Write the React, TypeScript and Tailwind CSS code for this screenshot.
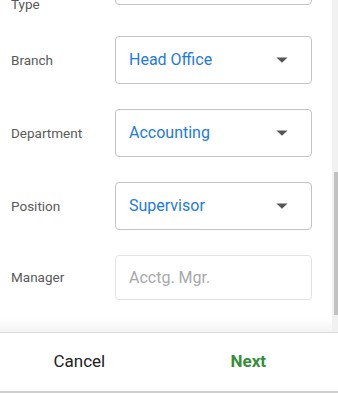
import React from "react";

const Arrow = () => (
  <svg width="12" height="6" viewBox="0 0 12 6" className="shrink-0">
    <path d="M0.5 0.5 L11.5 0.5 L6 5.8 Z" fill="#555555" />
  </svg>
);

function SelectRow({ label, value }: { label: string; value: string }) {
  return (
    <div className="flex items-center h-[48px]">
      <div className="w-[115px] pl-[11px] text-[13.5px] text-[#5a5a5a]">{label}</div>
      <div className="w-[197px] h-[48px] border border-[#c4c4c4] rounded-[4px] flex items-center pl-[13px] pr-[23px]">
        <span className="flex-1 text-[16px] text-[#1f7ae0]">{value}</span>
        <Arrow />
      </div>
    </div>
  );
}

export default function App() {
  return (
    <div
      className="w-[338px] h-[393px] bg-white flex flex-col overflow-hidden"
      style={{ fontFamily: "Roboto, 'Noto Sans', sans-serif" }}
    >
      <div className="h-[332px] flex shrink-0">
        <div className="flex-1 relative overflow-hidden">
          <div className="flex flex-col gap-[25px] -mt-[43px]">
            <div className="flex items-start h-[54px]">
              <div className="w-[115px] pl-[11px] text-[13.5px] text-[#5a5a5a] pt-[37px]">Type</div>
              <div className="w-[197px] h-[48px] border border-[#c4c4c4] rounded-[4px]" />
            </div>
            <SelectRow label="Branch" value="Head Office" />
            <SelectRow label="Department" value="Accounting" />
            <SelectRow label="Position" value="Supervisor" />
            <div className="flex items-center h-[45px]">
              <div className="w-[115px] pl-[11px] text-[13.5px] text-[#5a5a5a]">Manager</div>
              <div className="w-[197px] h-[45px] border border-[#e3e3e3] rounded-[4px] flex items-center pl-[13px]">
                <span className="text-[16px] text-[#a8a8a8]">Acctg. Mgr.</span>
              </div>
            </div>
          </div>
          <div className="absolute left-0 right-0 bottom-0 h-[14px] bg-gradient-to-b from-white to-[#f3f3f3]" />
        </div>
        <div className="w-[6px] bg-[#f1f1f1] flex flex-col">
          <div className="h-[172px]" />
          <div className="h-[143px] ml-[2px] w-[4px] bg-[#c1c1c1]" />
        </div>
      </div>
      <div className="h-[59px] border-t border-[#dadada] bg-white flex items-center shrink-0">
        <div className="w-[161px] text-center text-[17px] text-[#212121]">Cancel</div>
        <div className="w-[182px] text-center text-[17px] font-bold text-[#388e3c]">Next</div>
      </div>
      <div className="h-[2px] bg-[#cfcfcf] shrink-0" />
      <div className="flex-1 bg-white" />
    </div>
  );
}
